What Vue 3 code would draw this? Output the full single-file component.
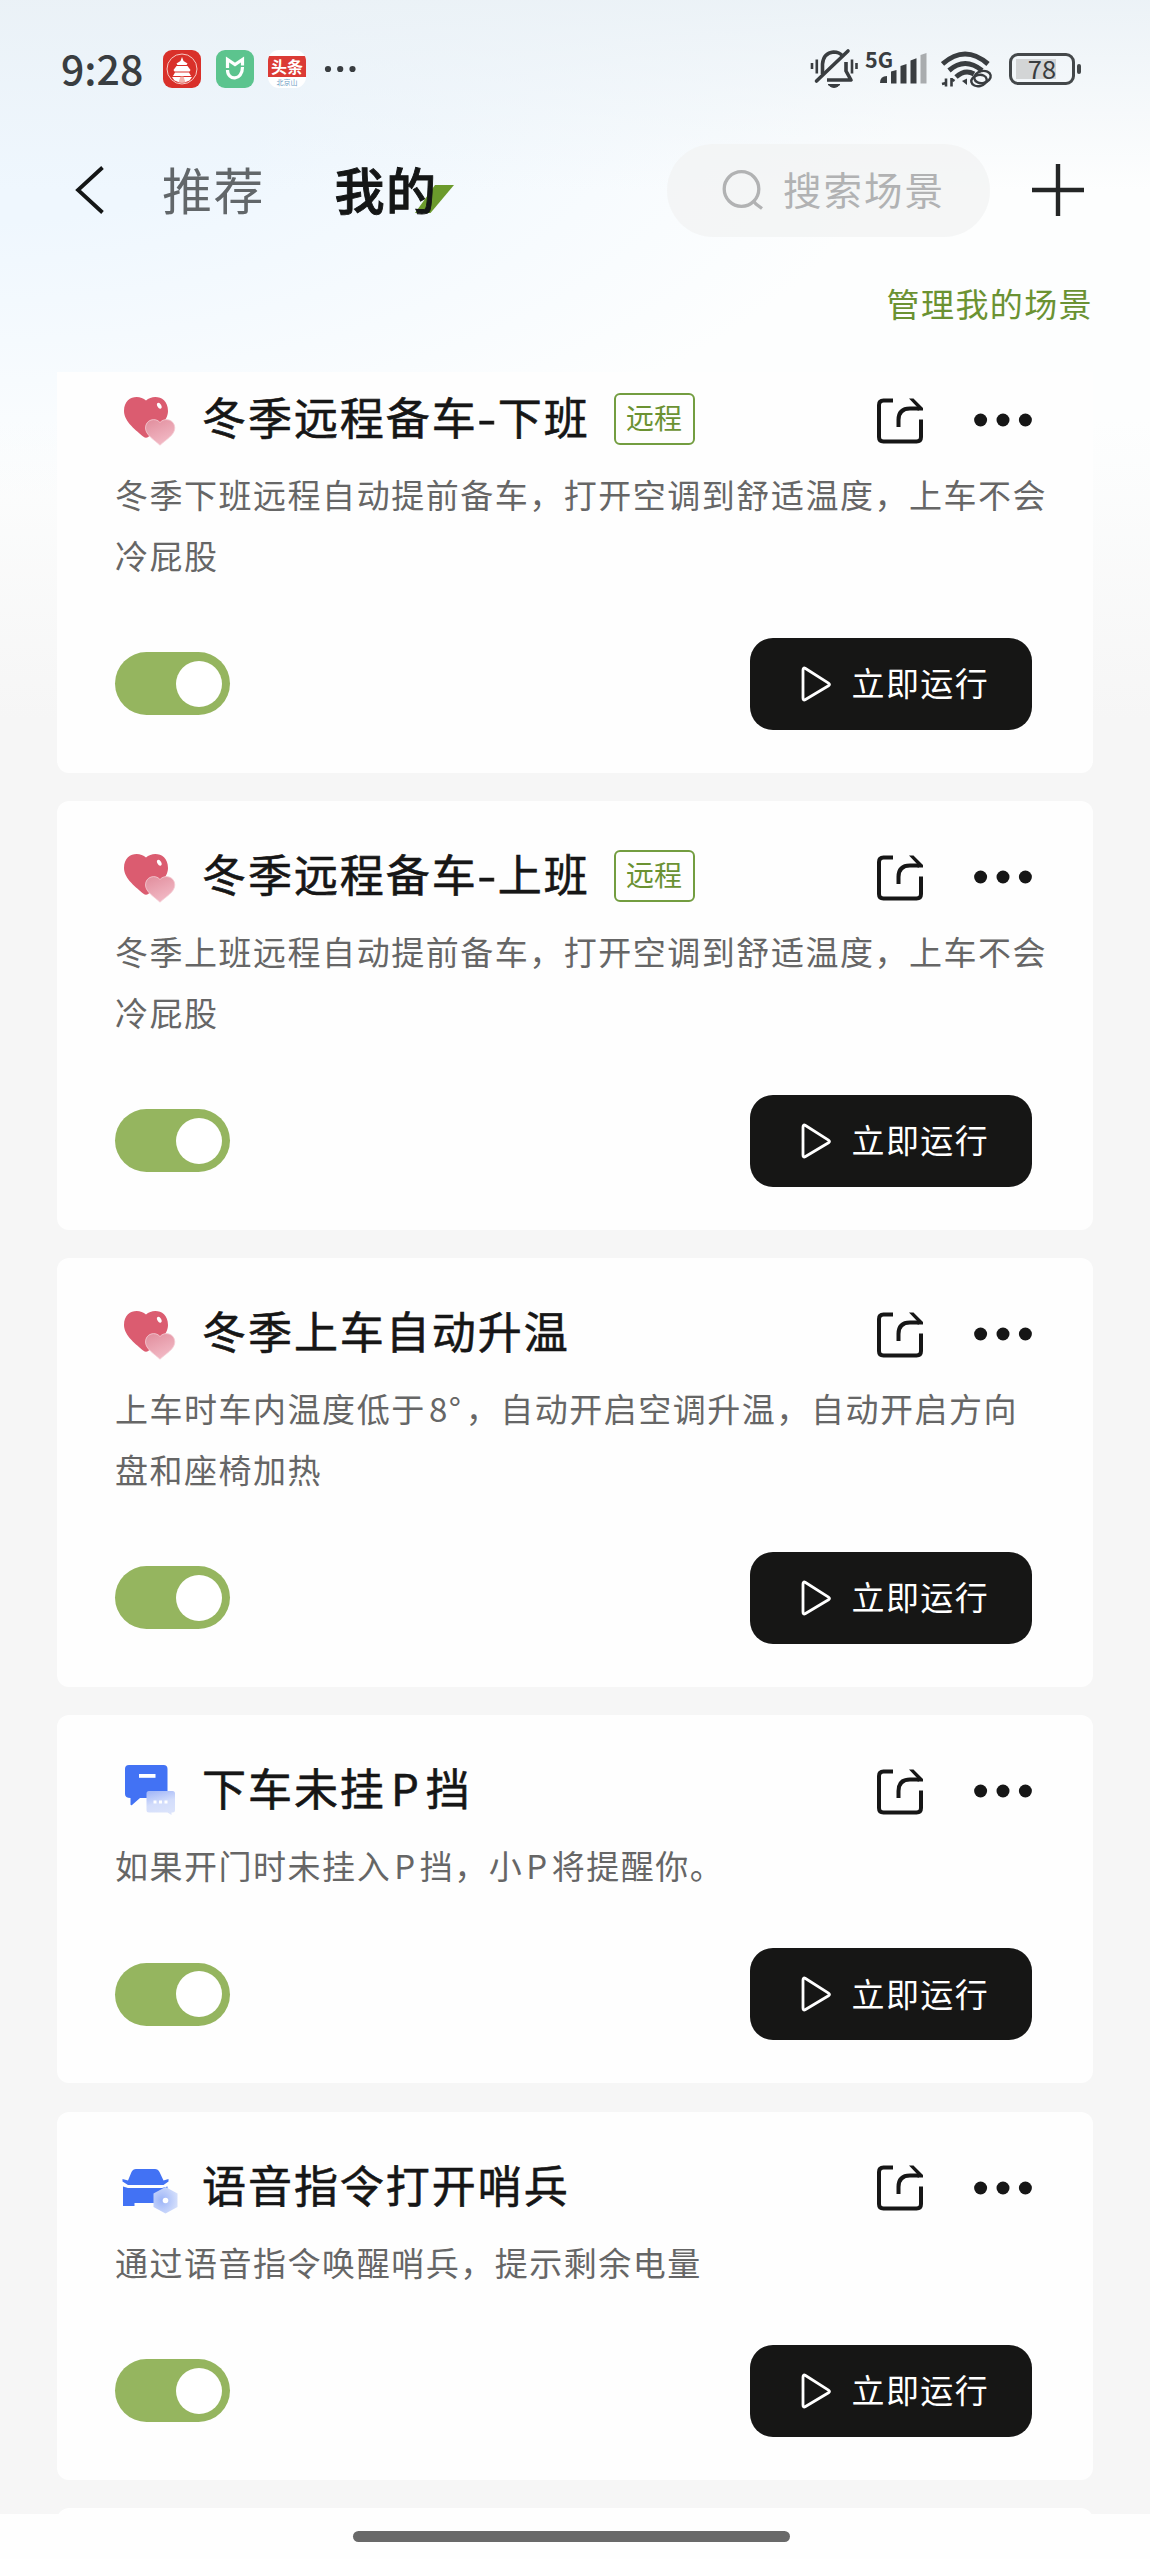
<script setup>
const scenes = [
  {
    icon: 'heart',
    remote: true,
    title: [{ t: '冬季远程备车' }, { t: '-', w: 20, wide: true }, { t: '下班' }],
    lines: [[{ t: '冬季下班远程自动提前备车，打开空调到舒适温度，上车不会' }], [{ t: '冷屁股' }]],
  },
  {
    icon: 'heart',
    remote: true,
    title: [{ t: '冬季远程备车' }, { t: '-', w: 20, wide: true }, { t: '上班' }],
    lines: [[{ t: '冬季上班远程自动提前备车，打开空调到舒适温度，上车不会' }], [{ t: '冷屁股' }]],
  },
  {
    icon: 'heart',
    title: [{ t: '冬季上车自动升温' }],
    lines: [
      [{ t: '上车时车内温度低于' }, { t: '8°', w: 40 }, { t: '，自动开启空调升温，自动开启方向' }],
      [{ t: '盘和座椅加热' }],
    ],
  },
  {
    icon: 'chat',
    title: [{ t: '下车未挂' }, { t: 'P', w: 40 }, { t: '挡' }],
    lines: [[{ t: '如果开门时未挂入' }, { t: 'P', w: 28.5 }, { t: '挡，小' }, { t: 'P', w: 28.5 }, { t: '将提醒你。' }]],
  },
  {
    icon: 'car',
    title: [{ t: '语音指令打开哨兵' }],
    lines: [[{ t: '通过语音指令唤醒哨兵，提示剩余电量' }]],
  },
]
const segStyle = (s) => (s.w ? { width: s.w + 'px' } : null)
</script>

<template>
  <div class="screen">
    <header class="status">
      <span class="time">9:28</span>
      <svg class="app" viewBox="0 0 38 38">
        <rect width="38" height="38" rx="9" fill="#d9302a" />
        <circle cx="19" cy="19" r="15" fill="none" stroke="#f6c9c4" stroke-width="1" />
        <path d="M19 7l1.500 4 4 2.500-1 1.500h-9l-1-1.500 4-2.500zM13.500 16h11l3 4-1 1.500h-15l-1-1.500zM12 22.500h14l2 3.500h-18zM9 27h20l-2.500 3.500q-7.500 4-15 0z" fill="#fff" />
        <path d="M17.500 26.500h3l2 6h-7z" fill="#f3b5ae" />
      </svg>
      <svg class="app" viewBox="0 0 38 38">
        <rect width="38" height="38" rx="9" fill="#5cc48e" />
        <path d="M11.500 18v-8.500l7.500 5 7.500-5v6" fill="none" stroke="#fff" stroke-width="3.200" />
        <path d="M11.500 20c0 11 15 11 15-3" fill="none" stroke="#fff" stroke-width="3.200" />
      </svg>
      <span class="app news">
        <span class="news-top">头条</span>
        <span class="news-sub">北京山</span>
      </span>
      <svg class="more-apps" viewBox="0 0 32 8">
        <circle cx="4" cy="4" r="3.100" /><circle cx="16.200" cy="4" r="3.100" /><circle cx="28.500" cy="4" r="3.100" />
      </svg>

      <svg class="bell" viewBox="0 0 48 42" fill="none" stroke="#393d40">
        <path d="M12.500 26V16q1-11 11-12 6 0 9 4" stroke-width="3.600" />
        <path d="M36 14v9l5 9H17" stroke-width="3.600" stroke-linejoin="round" />
        <path d="M6.500 33L38 3" stroke-width="3.600" stroke-linecap="round" />
        <path d="M2 15v6M6.800 11.500v14M42 11.500v14M46.500 15v6" stroke-width="2.600" />
        <path d="M18 36.500h12q-6 6-12 0z" fill="#393d40" stroke-width="1" />
      </svg>
      <div class="cell">
        <span class="net">5G</span>
        <svg viewBox="0 0 47 31" class="bars" fill="#393d40">
          <path d="M0 30q0-7 7-7v7zM11 18.500l5.500-1.500v13.500h-5.500zM20.500 13l6-2v19.500h-6zM30.500 7.500l6-2.200v25.200h-6z" />
          <path d="M40.500 2l6-2v30.500h-6z" fill="#a9acae" />
        </svg>
      </div>
      <svg class="wifi" viewBox="0 0 52 38" fill="none" stroke="#393d40">
        <path d="M1.500 14Q24-6 47 14" stroke-width="5" />
        <path d="M8 20.500q16-14 33 0" stroke-width="5" />
        <path d="M15 27q9-8 18-3" stroke-width="5" />
        <path d="M5 28.500v8M1 34l4-1M10.500 28v8.500M10.500 29l3 2" stroke-width="2.600" />
        <path d="M21 31l5-2.500v6.500z" fill="#393d40" stroke="none" />
        <g stroke-width="2.400">
          <ellipse cx="41.500" cy="27" rx="8.300" ry="6" transform="rotate(-12 41.500 27)" />
          <ellipse cx="38" cy="30.500" rx="7.800" ry="5.600" transform="rotate(-12 38 30.500)" />
        </g>
      </svg>
      <div class="battery"><span>78</span></div>
    </header>

    <nav class="nav">
      <svg class="back" viewBox="0 0 30 48"><path d="M27.500 1.500L3 24l24.500 22.500" fill="none" stroke="#141616" stroke-width="3.800" /></svg>
      <span class="tab">推荐</span>
      <span class="tab active">
        <svg class="mark" viewBox="0 0 39 28"><path d="M20 0h19L15.500 28H0z" fill="#6b9a2c" /></svg>
        <b>我的</b>
      </span>
      <div class="search">
        <svg viewBox="0 0 42 42" fill="none" stroke="#b1b2b3" stroke-width="3.300"><circle cx="19.500" cy="20" r="17.300" /><path d="M31 31.500l3 3.500 6 4.500" /></svg>
        <span>搜索场景</span>
      </div>
      <svg class="plus" viewBox="0 0 52 52"><path d="M26 0v52M0 26h52" stroke="#242626" stroke-width="4.400" /></svg>
    </nav>

    <div class="manage">管理我的场景</div>

    <main class="list">
      <section v-for="(s, i) in scenes" :key="i" class="card">
        <div class="head">
          <svg v-if="s.icon === 'heart'" class="icon" viewBox="0 0 60 60">
            <defs>
              <linearGradient :id="'h' + i" x1="0.200" y1="0" x2="0.700" y2="1">
                <stop offset="0" stop-color="#e2909f" /><stop offset="1" stop-color="#f3bcc8" />
              </linearGradient>
            </defs>
            <path d="M28 12.500C21 6 6 8 6 23c0 11 13 20 19.500 25.800q2.500 2 5 0C37 43 50 34 50 23 50 8 35 6 28 12.500z" fill="#db5c70" />
            <path d="M42 34.500c-4.500-5.500-14.500-3-14.500 5.500 0 7 9 12 14.500 17.200C47.500 52 56.800 47 56.800 40c0-8.500-10.300-11-14.800-5.500z" :fill="'url(#h' + i + ')'" stroke="#f4cdd4" stroke-width="0.800" />
            <ellipse cx="41.300" cy="17.800" rx="1.900" ry="3.200" fill="#fff" transform="rotate(-30 41.300 17.800)" />
          </svg>
          <svg v-else-if="s.icon === 'chat'" class="icon" viewBox="0 0 60 60">
            <defs>
              <linearGradient id="chatg" x1="0.300" y1="0" x2="0.600" y2="1">
                <stop offset="0" stop-color="#a5b9f8" /><stop offset="0.500" stop-color="#d3ddfb" /><stop offset="1" stop-color="#dce4fb" />
              </linearGradient>
            </defs>
            <path d="M11 6h34.500q4 0 4 4v29H22l-8 7q-1.500 1-1.500-1v-6q-5.500 0-5.500-4V10q0-4 4-4z" fill="#4272f4" />
            <rect x="21" y="15" width="16.500" height="3.800" fill="#fff" />
            <path d="M31 32h23.500q2.500 0 2.500 2.500v16.500q0 2.500-2.500 2.500h-1v2.500l-4-2.500H31q-2.500 0-2.500-2.500V34.500q0-2.500 2.500-2.500z" fill="url(#chatg)" />
            <path d="M35.500 43h3M41 43h3M46.500 43h3" stroke="#fff" stroke-width="3" />
          </svg>
          <svg v-else class="icon" viewBox="0 0 60 60">
            <defs>
              <radialGradient id="carg" cx="0.350" cy="0.500" r="0.650">
                <stop offset="0" stop-color="#9db5f8" /><stop offset="1" stop-color="#d3defb" />
              </radialGradient>
            </defs>
            <path d="M18 13h19q3 0 4.500 3l4 8.500 5-1.500v2.500l-5 3.500H10l-5.500-3.500V23l5.500 1.500L13.500 16q1.500-3 4.500-3z" fill="#4272f4" />
            <path d="M5 30.500l5 1.500h34l5.500-1.500V50H39v-3H16.500v3H5z" fill="#4272f4" />
            <path d="M47.500 31l12 6.500v13.500l-12 6.500-12-6.500V37.500z" fill="url(#carg)" />
            <circle cx="47.500" cy="44.500" r="2.800" fill="#fff" />
          </svg>

          <h2><span v-for="(g, k) in s.title" :key="k" :class="{ latin: g.w, dash: g.wide }" :style="segStyle(g)">{{ g.t }}</span></h2>
          <span v-if="s.remote" class="tag">远程</span>

          <svg class="share" viewBox="0 0 46 46" fill="none" stroke="#161616" stroke-width="4">
            <path d="M16 2.500H6.500Q2 2.500 2 7v32q0 4.500 4.500 4.500h33q4.500 0 4.500-4.500V21.500" />
            <path d="M21.500 29V22q0-11.500 11.500-11.500h9" />
            <path d="M32 0.500h4.500L46 10v2.500h-5.500V9.500z" fill="#161616" stroke="none" />
          </svg>
          <svg class="dots" viewBox="0 0 58 14" fill="#161616">
            <circle cx="6.600" cy="7" r="6.500" /><circle cx="29" cy="7" r="6.500" /><circle cx="51.400" cy="7" r="6.500" />
          </svg>
        </div>

        <div class="desc">
          <p v-for="(l, k) in s.lines" :key="k"><span v-for="(g, n) in l" :key="n" :class="{ latin: g.w }" :style="segStyle(g)">{{ g.t }}</span></p>
        </div>

        <div class="foot">
          <span class="toggle"><i></i></span>
          <button class="run">
            <svg viewBox="0 0 30 36"><path d="M2 4v28q0 3 2.500 1.500l23-13.700q2-1.300 0-2.600L4.500 2.500Q2 1 2 4z" fill="none" stroke="#fff" stroke-width="2.800" /></svg>
            <span>立即运行</span>
          </button>
        </div>
      </section>
      <section class="card"></section>
    </main>

    <footer class="home"><i></i></footer>
  </div>
</template>

<style>
body {
  margin: 0;
}
</style>

<style scoped>
.screen {
  width: 1150px;
  height: 2559px;
  overflow: hidden;
  display: flex;
  flex-direction: column;
  font-family: "Noto Sans CJK SC", sans-serif;
  background:
    linear-gradient(180deg, rgba(234, 241, 246, 0.9) 0, rgba(234, 241, 246, 0) 190px),
    radial-gradient(ellipse 900px 400px at 0 100px, #eff7fe 30%, rgba(240, 248, 255, 0) 100%),
    linear-gradient(180deg, #fdfefe 0, #fdfefe 420px, #f6f6f6 720px);
}
.status {
  height: 138px;
  box-sizing: border-box;
  padding: 0 75px 0 61px;
  display: flex;
  align-items: center;
  flex: none;
}
.time {
  width: 102px;
  margin-top: -5px;
  font-size: 41px;
  font-weight: 500;
  line-height: 60px;
  color: #393d40;
  white-space: nowrap;
}
.app {
  width: 38px;
  height: 38px;
  margin-right: 14.500px;
  flex: none;
}
.news {
  border-radius: 11px;
  overflow: hidden;
  background: #fff;
  text-align: center;
  margin-right: 18px;
}
.news-top {
  display: block;
  height: 21px;
  margin-top: 6px;
  background: #db3b35;
  color: #fff;
  font-weight: 700;
  font-size: 16px;
  line-height: 20px;
}
.news-sub {
  display: block;
  color: #6d9cc4;
  font-size: 7px;
  line-height: 10px;
}
.more-apps {
  width: 32px;
  height: 8px;
  fill: #393d40;
}
.bell {
  width: 48px;
  height: 42px;
  margin-left: auto;
  flex: none;
}
.cell {
  width: 62px;
  height: 34px;
  margin-left: 7px;
  position: relative;
  flex: none;
}
.net {
  position: absolute;
  left: 0;
  top: -5px;
  font-size: 21.500px;
  line-height: 24px;
  font-weight: 700;
  color: #393d40;
}
.bars {
  position: absolute;
  right: 0;
  bottom: 2px;
  width: 47px;
  height: 31px;
}
.wifi {
  width: 52px;
  height: 38px;
  margin-left: 14px;
  flex: none;
}
.battery {
  width: 66px;
  height: 32px;
  margin-left: 16px;
  box-sizing: border-box;
  border: 3px solid #44484a;
  border-radius: 9px;
  background: linear-gradient(90deg, #d3d5d6 40px, transparent 40px) 4px 3px / 52px 20px no-repeat;
  position: relative;
  text-align: center;
  font-size: 25.500px;
  line-height: 24px;
  color: #393d40;
  flex: none;
}
.battery::after {
  content: "";
  position: absolute;
  right: -9px;
  top: 8px;
  width: 4px;
  height: 10px;
  border-radius: 2px;
  background: #44484a;
}
.nav {
  height: 104px;
  padding: 0 66px 0 75px;
  display: flex;
  align-items: center;
  flex: none;
}
.back {
  width: 30px;
  height: 48px;
  margin-right: 57px;
}
.tab {
  margin-top: -5px;
  font-size: 50px;
  line-height: 72px;
  letter-spacing: 1.500px;
  color: #62676a;
}
.active {
  position: relative;
  margin-left: 69.500px;
  color: #141616;
}
.active b {
  position: relative;
  font-weight: 500;
  -webkit-text-stroke: 0.900px #141616;
}
.mark {
  position: absolute;
  left: 80px;
  top: 33px;
  width: 39px;
  height: 28px;
}
.search {
  width: 323px;
  height: 93px;
  margin-left: auto;
  margin-right: 42px;
  box-sizing: border-box;
  padding-left: 55px;
  border-radius: 47px;
  background: rgba(242, 243, 243, 0.75);
  display: flex;
  align-items: center;
  gap: 19px;
  font-size: 38.500px;
  letter-spacing: 2px;
  color: #b1b2b3;
}
.search span {
  margin-top: -4px;
}
.search svg {
  width: 42px;
  height: 42px;
}
.plus {
  width: 52px;
  height: 52px;
}
.manage {
  height: 130px;
  padding-right: 57px;
  text-align: right;
  font-size: 33px;
  line-height: 123px;
  letter-spacing: 1.400px;
  color: #6b9232;
  flex: none;
}
.list {
  height: 2142px;
  padding: 0 57px;
  overflow: hidden;
  display: flex;
  flex-direction: column;
  gap: 28.600px;
  flex: none;
}
.card {
  box-sizing: border-box;
  min-height: 100px;
  padding: 44px 61px 43px 58px;
  border-radius: 12px;
  background: #fefefe;
  flex: none;
}
.card:first-child {
  margin-top: -28px;
}
.head {
  height: 60px;
  display: flex;
  align-items: center;
}
.icon {
  width: 60px;
  height: 60px;
  margin-left: 3px;
  flex: none;
}
h2 {
  margin: -4px 0 0 24px;
  font-size: 44px;
  font-weight: 400;
  -webkit-text-stroke: 0.600px #161616;
  line-height: 60px;
  letter-spacing: 1.950px;
  color: #161616;
  white-space: nowrap;
}
.latin {
  display: inline-block;
  text-align: center;
}
.dash {
  transform: scaleX(1.250);
}
.tag {
  width: 81px;
  height: 52px;
  margin: 1px 0 0 24px;
  box-sizing: border-box;
  border: 2px solid #739d40;
  border-radius: 6px;
  text-align: center;
  font-size: 28px;
  line-height: 45px;
  color: #6b9232;
}
.share {
  width: 46px;
  height: 46px;
  margin-top: 5px;
  margin-left: auto;
}
.dots {
  width: 58px;
  height: 14px;
  margin-top: 4px;
  margin-left: 51px;
}
.desc {
  margin-top: 16px;
  color: #666;
  font-size: 33px;
  letter-spacing: 1.520px;
}
.desc p {
  margin: 0;
  height: 60.500px;
  line-height: 60.500px;
  white-space: nowrap;
}
.foot {
  margin-top: 52.500px;
  height: 92px;
  display: flex;
  align-items: center;
  justify-content: space-between;
}
.toggle {
  width: 115px;
  height: 63px;
  box-sizing: border-box;
  padding: 8.500px;
  border-radius: 32px;
  background: #95b55f;
  display: flex;
  justify-content: flex-end;
}
.toggle i {
  width: 46px;
  height: 46px;
  border-radius: 50%;
  background: #fff;
}
.run {
  width: 282px;
  height: 92px;
  padding: 0 0 0 51px;
  border: 0;
  border-radius: 23px;
  background: #161615;
  color: #fff;
  display: flex;
  align-items: center;
  gap: 20.500px;
  font: 400 33px/46px "Noto Sans CJK SC", sans-serif;
  letter-spacing: 1.400px;
  white-space: nowrap;
}
.run span {
  margin-top: -3px;
}
.run svg {
  width: 30px;
  height: 36px;
}
.home {
  flex: 1;
  background: #fefefe;
  display: flex;
  justify-content: center;
  padding-top: 17px;
}
.home i {
  width: 437px;
  height: 11px;
  margin-right: 7px;
  border-radius: 6px;
  background: #696969;
}
</style>
